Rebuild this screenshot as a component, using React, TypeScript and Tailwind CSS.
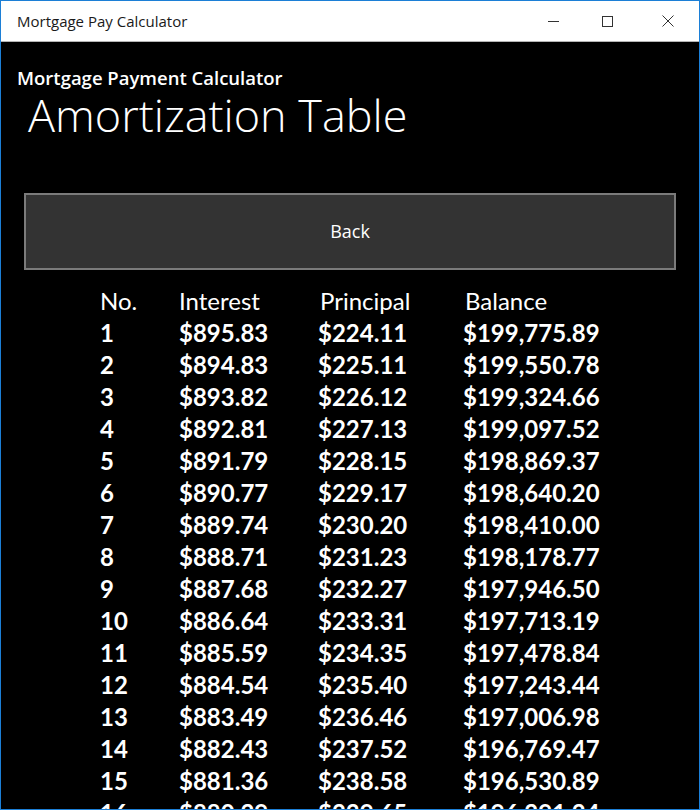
const rows: [string, string, string, string][] = [
  ["1", "$895.83", "$224.11", "$199,775.89"],
  ["2", "$894.83", "$225.11", "$199,550.78"],
  ["3", "$893.82", "$226.12", "$199,324.66"],
  ["4", "$892.81", "$227.13", "$199,097.52"],
  ["5", "$891.79", "$228.15", "$198,869.37"],
  ["6", "$890.77", "$229.17", "$198,640.20"],
  ["7", "$889.74", "$230.20", "$198,410.00"],
  ["8", "$888.71", "$231.23", "$198,178.77"],
  ["9", "$887.68", "$232.27", "$197,946.50"],
  ["10", "$886.64", "$233.31", "$197,713.19"],
  ["11", "$885.59", "$234.35", "$197,478.84"],
  ["12", "$884.54", "$235.40", "$197,243.44"],
  ["13", "$883.49", "$236.46", "$197,006.98"],
  ["14", "$882.43", "$237.52", "$196,769.47"],
  ["15", "$881.36", "$238.58", "$196,530.89"],
  ["16", "$880.29", "$239.65", "$196,291.24"],
];

function TitleBar() {
  return (
    <div className="flex h-[41px] items-center justify-between border-b border-[#b4b4b4] bg-white">
      <span className="pl-4 text-[15px] text-[#1a1a1a] [font-family:'Open_Sans',sans-serif]">
        Mortgage Pay Calculator
      </span>
      <div className="flex h-full items-center pr-[25px]">
        <div className="h-px w-[11px] bg-[#333]" />
        <div className="ml-[43px] h-[11px] w-[11px] border border-[#333]" />
        <svg className="ml-[49px]" width="12" height="12" viewBox="0 0 12 12">
          <path d="M0.5 0.5 L11.5 11.5 M11.5 0.5 L0.5 11.5" stroke="#333" strokeWidth="1" />
        </svg>
      </div>
    </div>
  );
}

export default function App() {
  return (
    <div className="h-[810px] w-[700px] overflow-hidden border border-[#1c7fd6] bg-black">
      <TitleBar />
      <div className="px-[16px] text-white [font-family:'Open_Sans',sans-serif]">
        <div className="pt-[23px] text-[18.5px] font-semibold leading-[26px]">
          Mortgage Payment Calculator
        </div>
        <div className="pl-[11px] text-[45px] font-light leading-[48px]">
          Amortization Table
        </div>
        <div className="mt-[54px] ml-[7px] mr-[7px] flex h-[77px] items-center justify-center border-2 border-[#7b7b7b] bg-[#333333] text-[18px]">
          Back
        </div>
      </div>
      <div className="mt-[15px] pl-[99px] text-white [font-family:Lato,sans-serif] text-[24px] leading-[32px]">
        <div className="grid grid-cols-[79px_139px_145px_1fr]">
          <span>No.</span>
          <span>Interest</span>
          <span className="pl-[2px]">Principal</span>
          <span className="pl-[2px]">Balance</span>
        </div>
        {rows.map((r) => (
          <div key={r[0]} className="grid grid-cols-[79px_139px_145px_1fr] font-bold">
            <span>{r[0]}</span>
            <span>{r[1]}</span>
            <span>{r[2]}</span>
            <span>{r[3]}</span>
          </div>
        ))}
      </div>
    </div>
  );
}
